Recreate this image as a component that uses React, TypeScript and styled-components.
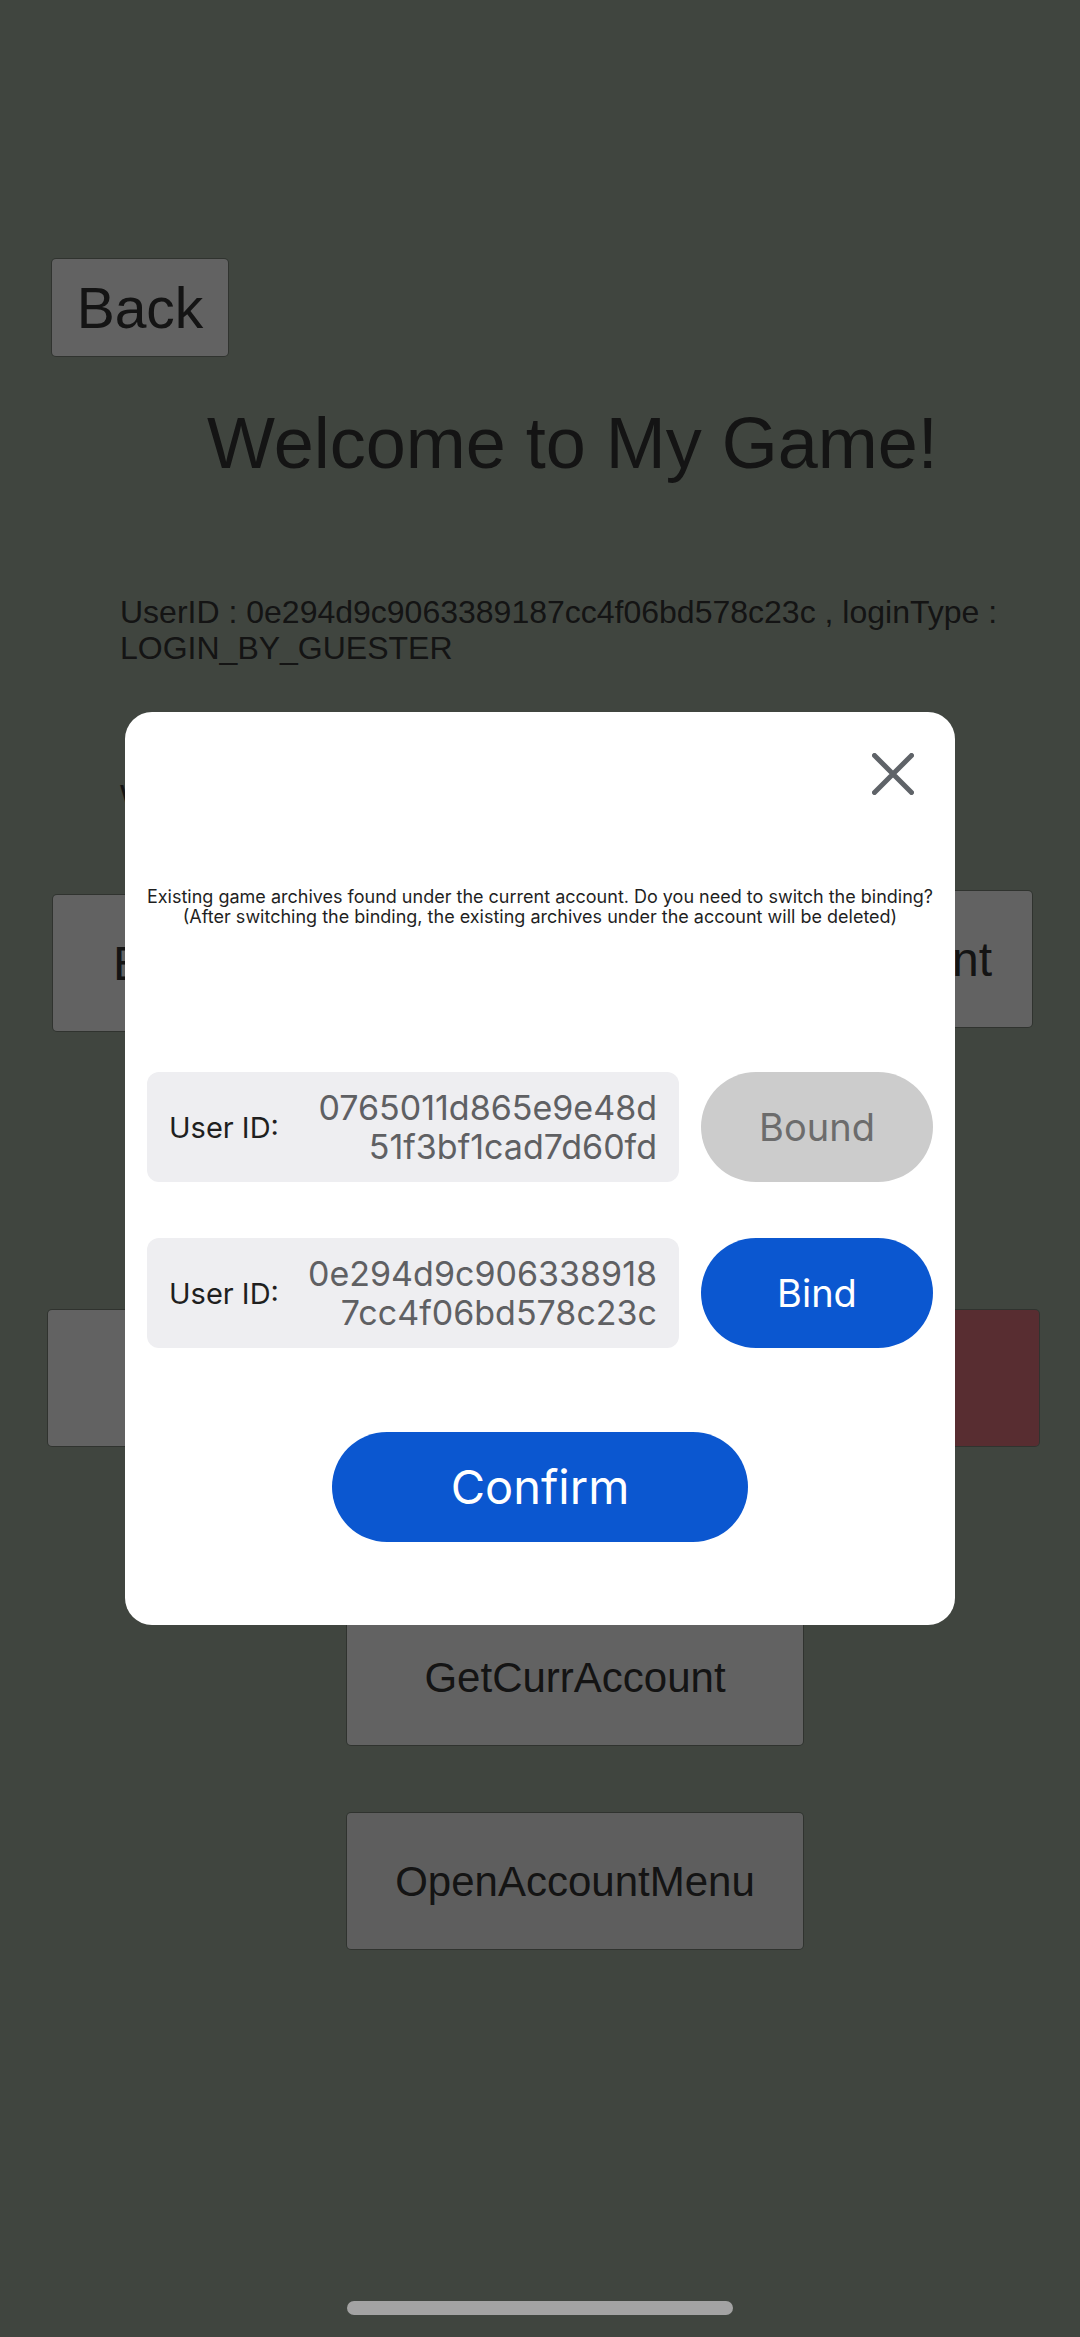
import React from 'react';
import styled, { createGlobalStyle } from 'styled-components';

const GlobalStyle = createGlobalStyle`
  *, *::before, *::after { box-sizing: border-box; }
  body {
    margin: 0;
    background: #a0ad9e;
    font-family: "Liberation Sans", Arial, sans-serif;
    color: #323232;
  }
  h1, p { margin: 0; font-weight: 400; }
  button { font: inherit; color: inherit; }
`;

const Page = styled.main`
  min-height: 100vh;
  padding: 258px 40px 0 47px;
  display: flex;
  flex-direction: column;
`;

const GameButton = styled.button<{ $tone?: string }>`
  width: 458px;
  height: 138px;
  padding: 2px 0 0;
  border: 1px solid rgba(0, 0, 0, 0.25);
  border-radius: 5px;
  background: ${(p) => p.$tone ?? '#f5f5f5'};
  background-clip: padding-box;
  font-size: 42px;
  line-height: 48px;
`;

const BackButton = styled(GameButton)`
  width: 178px;
  height: 99px;
  margin-left: 4px;
  padding: 0;
  font-size: 57px;
  line-height: 64px;
`;

const AccountButton = styled(GameButton)<{ $align: 'left' | 'right' }>`
  margin-top: ${(p) => (p.$align === 'left' ? 4 : 0)}px;
  padding: 2px 40px 0 60px;
  text-align: ${(p) => p.$align};
  font-size: 48px;
`;

const Title = styled.h1`
  margin: 45px 0 0 160px;
  font-size: 72px;
  line-height: 82px;
`;

const Info = styled.div`
  margin: 110px 0 0 73px;
  font-size: 32px;
  line-height: 36px;
`;

const Status = styled.p`
  margin-top: 112px;
`;

const ButtonRow = styled.div`
  display: flex;
  justify-content: space-between;
  align-items: flex-start;
`;

const AccountButtons = styled(ButtonRow)`
  margin: 76px 7px 0 5px;
`;

const SessionButtons = styled(ButtonRow)`
  margin-top: 277px;
`;

const ButtonStack = styled.div`
  display: flex;
  flex-direction: column;
  align-items: center;
  gap: 66px;
  margin: 161px 0 0 63px;
`;

const Scrim = styled.div`
  position: fixed;
  inset: 0;
  display: flex;
  align-items: center;
  justify-content: center;
  background: rgba(0, 0, 0, 0.6);
`;

const Dialog = styled.section`
  width: 830px;
  max-width: 92%;
  padding: 34px 22px 83px;
  display: flex;
  flex-direction: column;
  border-radius: 27px;
  background: #fff;
  font-family: Inter, Roboto, sans-serif;
  color: #1f1f1f;
`;

const CloseButton = styled.button`
  align-self: flex-end;
  width: 56px;
  height: 56px;
  margin-right: 12px;
  padding: 0;
  display: grid;
  place-items: center;
  border: 0;
  background: none;
  color: #5f6368;
`;

const Message = styled.p`
  margin: 85px -8px 0;
  text-align: center;
  font-size: 18px;
  line-height: 20px;
`;

const Accounts = styled.div`
  display: flex;
  flex-direction: column;
  gap: 56px;
  margin-top: 145px;
`;

const AccountRow = styled.div`
  display: flex;
  gap: 22px;
`;

const AccountField = styled.div`
  flex: 1;
  height: 110px;
  padding: 0 22px;
  display: flex;
  align-items: center;
  justify-content: space-between;
  border-radius: 12px;
  background: #eeeef1;
`;

const FieldLabel = styled.span`
  font-size: 29px;
  line-height: 39px;
`;

const FieldValue = styled.span`
  text-align: right;
  font-size: 34px;
  line-height: 39px;
  color: #5f6063;
`;

const PillButton = styled.button`
  width: 232px;
  height: 110px;
  padding: 0;
  border: 0;
  border-radius: 55px;
  background: #0b57d0;
  color: #fff;
  font-size: 38px;
  line-height: 48px;

  &:disabled {
    background: #ccc;
    color: #6c6c6c;
  }
`;

const ConfirmButton = styled(PillButton)`
  align-self: center;
  width: 416px;
  margin-top: 84px;
  font-size: 47px;
`;

const HomeIndicator = styled.div`
  position: fixed;
  bottom: 22px;
  left: 50%;
  width: 386px;
  height: 14px;
  transform: translateX(-50%);
  border-radius: 7px;
  background: #a3a3a3;
`;

const accounts = [
  { id: ['0765011d865e9e48d', '51f3bf1cad7d60fd'], bound: true },
  { id: ['0e294d9c906338918', '7cc4f06bd578c23c'], bound: false },
];

const CloseIcon = () => (
  <svg width="42" height="42" viewBox="0 0 42 42" fill="none" stroke="currentColor" strokeWidth="5" strokeLinecap="round" aria-hidden="true">
    <path d="M2.5 2.5 39.5 39.5M39.5 2.5 2.5 39.5" />
  </svg>
);

export default function App() {
  return (
    <>
      <GlobalStyle />
      <Page>
        <BackButton type="button">Back</BackButton>
        <Title>Welcome to My Game!</Title>
        <Info>
          <p>UserID : 0e294d9c9063389187cc4f06bd578c23c , loginType : LOGIN_BY_GUESTER</p>
          <Status>W</Status>
        </Info>
        <AccountButtons>
          <AccountButton type="button" $align="left">BindAccount</AccountButton>
          <AccountButton type="button" $align="right">Account</AccountButton>
        </AccountButtons>
        <SessionButtons>
          <GameButton type="button">Logout</GameButton>
          <GameButton type="button" $tone="#dc707a">Delete</GameButton>
        </SessionButtons>
        <ButtonStack>
          <GameButton type="button">GetCurrAccount</GameButton>
          <GameButton type="button" $tone="#ebebeb">OpenAccountMenu</GameButton>
        </ButtonStack>
      </Page>
      <Scrim>
        <Dialog role="dialog" aria-modal="true" aria-describedby="dialog-message">
          <CloseButton type="button" aria-label="Close">
            <CloseIcon />
          </CloseButton>
          <Message id="dialog-message">
            Existing game archives found under the current account. Do you need to switch the binding?
            <br />
            (After switching the binding, the existing archives under the account will be deleted)
          </Message>
          <Accounts>
            {accounts.map(({ id, bound }) => (
              <AccountRow key={id[0]}>
                <AccountField>
                  <FieldLabel>User ID:</FieldLabel>
                  <FieldValue>
                    {id[0]}
                    <br />
                    {id[1]}
                  </FieldValue>
                </AccountField>
                <PillButton type="button" disabled={bound}>
                  {bound ? 'Bound' : 'Bind'}
                </PillButton>
              </AccountRow>
            ))}
          </Accounts>
          <ConfirmButton type="button">Confirm</ConfirmButton>
        </Dialog>
      </Scrim>
      <HomeIndicator />
    </>
  );
}
